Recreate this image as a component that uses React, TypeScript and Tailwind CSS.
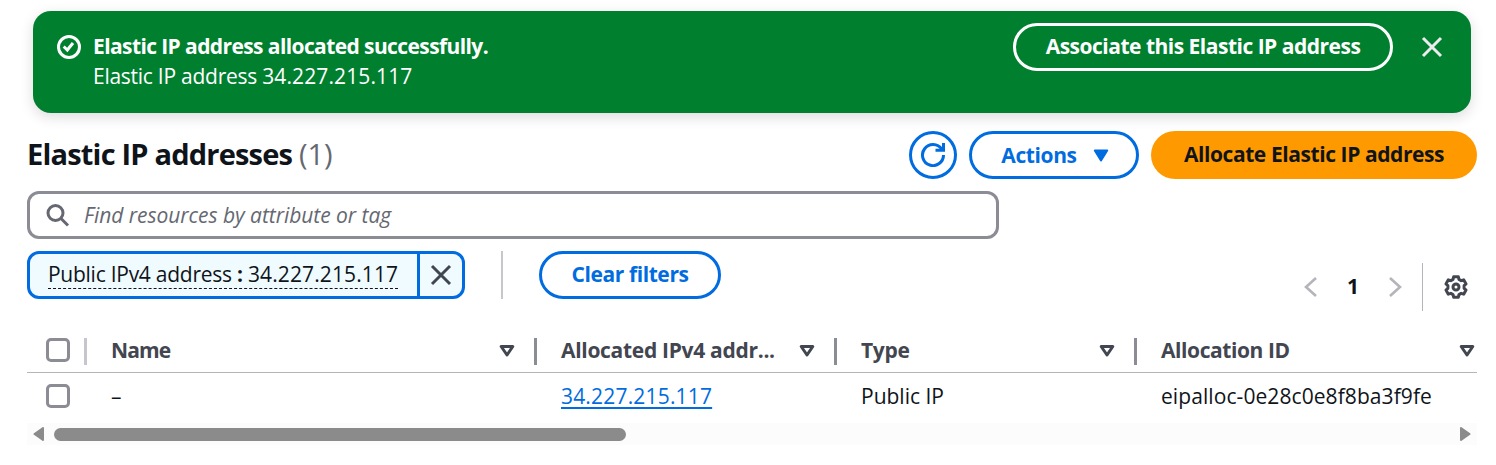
function Close({ className }: { className: string }) {
  return (
    <svg viewBox="0 0 24 24" className={className} fill="none" stroke="currentColor" strokeWidth="3">
      <path d="M3 3 21 21M21 3 3 21" />
    </svg>
  );
}

function SortIcon() {
  return (
    <svg viewBox="0 0 16 14" className="h-3.5 w-4 shrink-0" fill="none" stroke="currentColor" strokeWidth="3" strokeLinejoin="round">
      <path d="M2.200 2.500h11.600L8 11z" />
    </svg>
  );
}

// Six lobes around the centre of a 24-unit box.
const gearPoints = Array.from({ length: 6 }, (_, k) =>
  [
    [-21, 8.2],
    [-13, 10.5],
    [13, 10.5],
    [21, 8.2],
  ].map(([offset, radius]) => {
    const angle = ((k * 60 + offset) * Math.PI) / 180;
    return `${(12 + radius * Math.sin(angle)).toFixed(2)},${(12 - radius * Math.cos(angle)).toFixed(2)}`;
  }),
)
  .flat()
  .join(" ");

function Checkbox() {
  return <span className="block size-6 rounded-[5px] border-3 border-[#8c8c94] bg-white" />;
}

function HeaderCell({ label, className }: { label: string; className: string }) {
  return (
    <div className={`flex h-full items-center pl-6 ${className}`}>
      <span className="flex-1 pb-0.5 whitespace-nowrap">{label}</span>
      <SortIcon />
    </div>
  );
}

export default function App() {
  return (
    <div className="h-[465px] w-[1496px] overflow-hidden bg-white pt-[11px] font-['Open_Sans',sans-serif] text-[21px] leading-[30px] text-[#0f141a]">
      <section className="ml-[33px] flex h-[102px] w-[1438px] items-start rounded-[18px] bg-[#00802f] pt-3 pr-[27px] pl-6 text-white shadow-[0_4px_14px_rgba(0,7,22,0.14)]">
        <svg viewBox="0 0 24 24" className="mt-3 mr-3 size-6" fill="none" stroke="currentColor" strokeWidth="3">
          <circle cx="12" cy="12" r="10.5" />
          <path d="m6.700 11.500 3.600 3.500 5.700-7" />
        </svg>
        <div className="flex-1 pt-2 whitespace-nowrap">
          <div className="font-bold tracking-[-0.6px]">Elastic IP address allocated successfully.</div>
          <div>
            <span className="tracking-[-0.26px]">Elastic IP address </span>
            <span className="tracking-[0.12px]">34.227.215.117</span>
          </div>
        </div>
        <button className="h-12 w-[380px] rounded-full border-3 border-white pb-0.5 font-bold tracking-[-0.5px] whitespace-nowrap">
          Associate this Elastic IP address
        </button>
        <Close className="mt-3 ml-[27px] size-6 text-[#ebebf0]" />
      </section>

      <header className="mt-[18px] ml-[27px] flex h-12 w-[1450px] items-center whitespace-nowrap">
        <h1 className="flex-1 pb-0.5 text-[29px] leading-9 font-bold tracking-[-0.8px]">
          Elastic IP addresses <span className="font-normal tracking-normal text-[#656871]">(1)</span>
        </h1>
        <button className="flex size-12 items-center justify-center rounded-full border-3 border-[#006ce0] text-[#006ce0]">
          <svg viewBox="0 0 24 24" className="size-6" fill="none" stroke="currentColor" strokeWidth="3">
            <path d="M22.500 12A10.500 10.500 0 1 1 20.700 6.200" />
            <path d="M22.500 0v7.300H14.500" />
          </svg>
        </button>
        <button className="ml-3 flex h-12 w-[170px] items-center justify-center gap-4 rounded-full border-3 border-[#006ce0] pl-0.5 font-bold tracking-[-0.4px] text-[#006ce0]">
          <span className="pb-px">Actions</span>
          <svg viewBox="0 0 16 13" className="h-[13px] w-4" fill="currentColor" stroke="currentColor" strokeWidth="2" strokeLinejoin="round">
            <path d="M1.800 1.500h12.400L8 11.500z" />
          </svg>
        </button>
        <button className="ml-3 h-12 w-[326px] rounded-full bg-[#ff9900] pb-0.5 font-bold tracking-[-0.42px]">Allocate Elastic IP address</button>
      </header>

      <div className="mt-3 ml-[27px] flex h-12 w-[972px] items-center rounded-xl border-3 border-[#8c8c94] pl-4 text-[#656871]">
        <svg viewBox="0 0 24 24" className="size-6" fill="none" stroke="currentColor" strokeWidth="3">
          <circle cx="9.500" cy="10" r="7.500" />
          <path d="m15 15.500 7 7" />
        </svg>
        <span className="ml-[14px] pb-px tracking-[-0.04px] whitespace-nowrap italic">Find resources by attribute or tag</span>
      </div>

      <div className="mt-3 ml-[27px] flex h-[60px] w-[1450px]">
        <div className="flex h-12 w-[438px] rounded-xl border-3 border-[#006ce0] bg-[#f0fbff]">
          <div className="flex w-[390px] border-r-3 border-[#006ce0] pt-1.5 pl-[18px]">
            <span className="h-[29px] border-b border-dashed border-[#0f141a] leading-[29px] tracking-[-0.26px] whitespace-nowrap">
              Public IPv4 address <b>:</b> <span className="tracking-[0.12px]">34.227.215.117</span>
            </span>
          </div>
          <div className="flex flex-1 items-center justify-center text-[#424650]">
            <Close className="size-6" />
          </div>
        </div>
        <div className="ml-9 h-12 w-0.5 bg-[#c6c6cd]" />
        <button className="ml-9 h-12 w-[182px] rounded-full border-3 border-[#006ce0] pb-0.5 font-bold tracking-[-0.4px] text-[#006ce0]">Clear filters</button>
        <nav className="mt-3 ml-auto flex h-12 items-center text-[#b4b4bb]">
          <svg viewBox="0 0 13 20" className="h-5 w-[13px]" fill="none" stroke="currentColor" strokeWidth="2.600">
            <path d="M12 1 2 10l10 9" />
          </svg>
          <span className="w-[72px] pb-0.5 text-center font-bold text-[#0f141a]">1</span>
          <svg viewBox="0 0 13 20" className="h-5 w-[13px]" fill="none" stroke="currentColor" strokeWidth="2.600">
            <path d="m1 1 10 9-10 9" />
          </svg>
          <span className="ml-5 h-12 w-px bg-[#b4b4bb]" />
          <svg viewBox="0 0 24 24" className="mr-[9px] ml-[21px] size-6 text-[#424650]" fill="none" stroke="currentColor" strokeWidth="3" strokeLinejoin="round">
            <polygon points={gearPoints} />
            <circle cx="12" cy="12" r="3" />
          </svg>
        </nav>
      </div>

      <div className="mt-[19px] ml-[27px] w-[1450px]">
        <div className="flex h-[43px] items-center border-b border-[#b4b4bb] font-bold text-[#424650]">
          <div className="flex w-[60px] items-center pl-[19px]">
            <div className="pb-0.5">
              <Checkbox />
            </div>
            <span className="ml-[14px] h-[27px] w-[3px] bg-[#c6c6cd]" />
          </div>
          <HeaderCell label="Name" className="w-[428px] tracking-[-0.9px]" />
          <span className="ml-[19px] h-[27px] w-[3px] bg-[#8c8c94]" />
          <HeaderCell label="Allocated IPv4 addr..." className="w-[278px] tracking-[-0.3px]" />
          <span className="ml-[19px] h-[27px] w-[3px] bg-[#8c8c94]" />
          <HeaderCell label="Type" className="w-[278px] tracking-[-0.3px]" />
          <span className="ml-[19px] h-[27px] w-[3px] bg-[#8c8c94]" />
          <HeaderCell label="Allocation ID" className="w-[338px] tracking-[-0.42px]" />
        </div>
        <div className="flex h-[50px] items-center pb-1">
          <div className="w-[84px] pl-[19px]">
            <Checkbox />
          </div>
          <div className="w-[450px]">–</div>
          <div className="w-[300px] text-[#006ce0]">
            <a className="tracking-[0.18px] underline decoration-2 underline-offset-[3px]">34.227.215.117</a>
          </div>
          <div className="w-[300px]">Public IP</div>
          <div className="tracking-[0.08px]">eipalloc-0e28c0e8f8ba3f9fe</div>
        </div>
        <div className="flex h-[22px] items-center bg-[#fcfcfc] pl-1.5 text-[#8b8b8b]">
          <svg viewBox="0 0 11 14" className="h-3.5 w-[11px]" fill="currentColor" stroke="currentColor" strokeWidth="2" strokeLinejoin="round">
            <path d="M10 1v12L1.500 7z" />
          </svg>
          <span className="ml-2.5 h-[13px] w-[572px] rounded-full bg-[#8b8b8b]" />
          <svg viewBox="0 0 11 14" className="mr-1.5 ml-auto h-3.5 w-[11px]" fill="currentColor" stroke="currentColor" strokeWidth="2" strokeLinejoin="round">
            <path d="M1 1v12l8.500-6z" />
          </svg>
        </div>
      </div>
    </div>
  );
}
